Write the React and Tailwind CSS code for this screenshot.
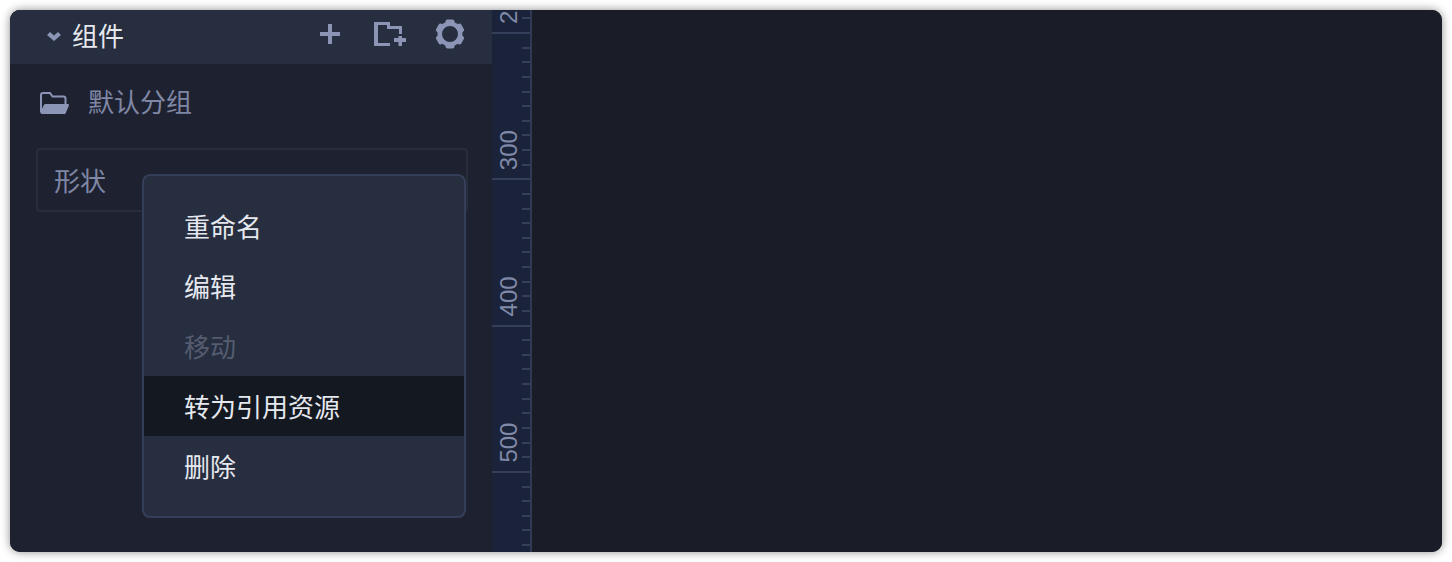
const cjk = { fontFamily: '"Noto Sans CJK SC", "Liberation Sans", sans-serif' };

function Gear() {
  const teeth = [0, 60, 120, 180, 240, 300];
  return (
    <svg width="30" height="30" viewBox="0 0 30 30" fill="none">
      <circle cx="15" cy="15" r="10.25" stroke="#8c95b6" strokeWidth="4.5" />
      {teeth.map((a) => (
        <rect key={a} x="10.5" y="0.5" width="9" height="6" rx="2" fill="#8c95b6" transform={`rotate(${a} 15 15)`} />
      ))}
    </svg>
  );
}

function FolderPlus() {
  return (
    <svg width="32" height="24" viewBox="0 0 32 24" fill="#8c95b6">
      <path d="M0 0H16V4H28V12H25V7H13V3H4V21H16V24H0Z" />
      <path d="M20 16H24.5V14H28V16H32V20H28V24H24.5V20H20Z" />
    </svg>
  );
}

function FolderOpen() {
  return (
    <svg width="29" height="22" viewBox="0 0 29 22" fill="none">
      <path d="M1 20V3C1 1.8 1.8 1 3 1H10L12.5 4.5H23.5C24.7 4.5 25.5 5.3 25.5 6.5V12" stroke="#8c95b6" strokeWidth="2" />
      <path d="M0.5 20L3.8 13C4.2 12.3 4.8 12 5.5 12H27.8C28.7 12 29.2 12.8 28.9 13.6L26 20.5C25.6 21.5 25 22 24 22H2C0.8 22 0 21 0.5 20Z" fill="#8c95b6" />
    </svg>
  );
}

function Ruler() {
  const ticks = [];
  for (let k = -1; k <= 35; k++) ticks.push(k);
  const labels = ["2", "300", "400", "500"];
  return (
    <svg className="block shrink-0" width="40" height="542" viewBox="492 10 40 542">
      <rect x="492" y="10" width="40" height="542" fill="#1a2339" />
      {ticks.map((k) => {
        const y = Math.round(33 + k * 14.63);
        const major = k % 10 === 0;
        return <rect key={k} x={major ? 492 : 522} y={y - 1} width={major ? 38 : 8} height="2" fill="#363f5a" />;
      })}
      <rect x="530" y="10" width="2" height="542" fill="#303a56" />
      {labels.map((v, i) => (
        <text
          key={v}
          transform={`translate(517 ${24 + i * 146.2}) rotate(-90)`}
          fontFamily='"Liberation Sans", sans-serif'
          fontSize="24"
          fill="#8089a8"
        >
          {v}
        </text>
      ))}
    </svg>
  );
}

const items = [
  { t: "重命名", c: "text-[#e6e8ef]" },
  { t: "编辑", c: "text-[#e6e8ef]" },
  { t: "移动", c: "text-[#555c70]" },
  { t: "转为引用资源", c: "text-[#e6e8ef] bg-[#141821]" },
  { t: "删除", c: "text-[#e6e8ef]" },
];

export default function App() {
  return (
    <div className="w-[1452px] h-[562px] bg-white p-[10px] overflow-hidden" style={cjk}>
      <div className="w-full h-full flex rounded-[10px] overflow-hidden bg-[#1a1d27] shadow-[0_0_10px_rgba(0,0,0,0.45)]">
        <div className="relative w-[482px] shrink-0 bg-[#1e2230]">
          <div className="h-[54px] bg-[#262e3f] flex items-center pl-[37px] pr-[27px]">
            <svg width="14" height="9" viewBox="0 0 14 9" className="mr-[11px] mt-[-2px]" fill="#8c95b6">
              <path d="M0 3L3 0L7 3.5L11 0L14 3L7 9Z" />
            </svg>
            <span className="text-[26px] leading-[36px] text-[#e6e8ef] mt-[-5px]">组件</span>
            <div className="ml-auto flex items-center">
              <svg width="20" height="20" viewBox="0 0 20 20" stroke="#8c95b6" strokeWidth="4" className="mt-[-6px]">
                <path d="M0 10H20M10 0V20" />
              </svg>
              <div className="ml-[34px] mt-[-6px]">
                <FolderPlus />
              </div>
              <div className="ml-[29px] mt-[-6px]">
                <Gear />
              </div>
            </div>
          </div>
          <div className="flex items-center mt-[21px] ml-[30px] h-[36px]">
            <FolderOpen />
            <span className="ml-[19px] text-[26px] leading-[36px] text-[#7f87a5] mt-[-4px]">默认分组</span>
          </div>
          <div className="mt-[27px] ml-[26px] w-[432px] h-[64px] border-2 border-[#272d3d] rounded-[4px] pl-[16px] flex items-center">
            <span className="text-[26px] leading-[36px] text-[#7f87a5]">形状</span>
          </div>
          <div className="absolute left-[132px] top-[164px] w-[324px] h-[344px] bg-[#262e3f] border-2 border-[#343e58] rounded-[8px] pt-[20px] overflow-hidden">
            {items.map((it) => (
              <div key={it.t} className={`h-[60px] pl-[40px] pb-[2px] flex items-center text-[26px] ${it.c}`}>
                {it.t}
              </div>
            ))}
          </div>
        </div>
        <Ruler />
        <div className="flex-1 bg-[#1a1d27]" />
      </div>
    </div>
  );
}
